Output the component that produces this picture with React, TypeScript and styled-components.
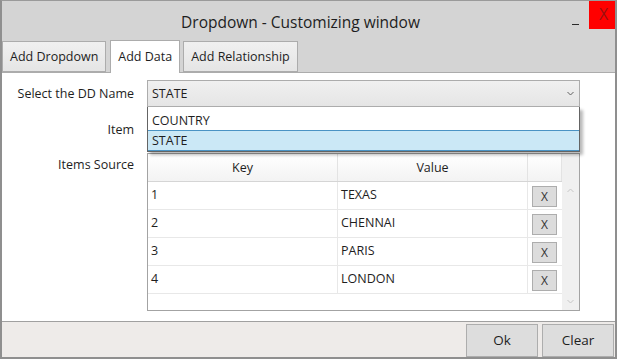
import React from "react";
import styled, { createGlobalStyle } from "styled-components";

const Global = createGlobalStyle`
  html, body { margin: 0; padding: 0; background: #ffffff; }
  body { font-family: "Open Sans", "Noto Sans", sans-serif; color: #1e1e1e; }
  * { box-sizing: border-box; }
`;

const Window = styled.div`
  width: 617px;
  height: 359px;
  display: flex;
  flex-direction: column;
  border: 2px solid #8f8f8f;
  border-top: 1px solid #9a9a9a;
  background: #d4d4d4;
  overflow: hidden;
`;

const TitleBar = styled.div`
  height: 39px;
  display: grid;
  grid-template-columns: 1fr auto 1fr;
  background: #d4d4d4;
`;

const Title = styled.div`
  grid-column: 2;
  font-size: 15.5px;
  line-height: 20px;
  padding-top: 11px;
  padding-right: 16px;
  color: #1e1e1e;
  white-space: nowrap;
`;

const Controls = styled.div`
  grid-column: 3;
  display: flex;
  justify-content: flex-end;
  align-items: flex-start;
`;

const Minimize = styled.div`
  width: 7px;
  height: 1px;
  margin-top: 23px;
  margin-right: 10px;
  background: #2a2a2a;
`;

const Close = styled.div`
  width: 28px;
  height: 29px;
  margin-top: -1px;
  margin-right: -2px;
  background: #ff0000;
  color: #9a1010;
  font-size: 16px;
  line-height: 29px;
  text-align: center;
  padding-left: 1px;
`;

const TabStrip = styled.div`
  height: 32px;
  display: flex;
  align-items: flex-end;
  background: #d4d4d4;
`;

const Tab = styled.div<{ $active?: boolean }>`
  height: ${(p) => (p.$active ? "33px" : "31px")};
  margin-bottom: ${(p) => (p.$active ? "-1px" : "0")};
  margin-right: ${(p) => (p.$active ? "3px" : "4px")};
  position: relative;
  z-index: ${(p) => (p.$active ? 2 : 0)};
  padding: 0 7px;
  border: 1px solid #acacac;
  border-bottom: ${(p) => (p.$active ? "none" : "1px solid #acacac")};
  background: ${(p) =>
    p.$active ? "#ffffff" : "linear-gradient(#f0f0f0, #e5e5e5)"};
  font-size: 12.5px;
  line-height: ${(p) => (p.$active ? "31px" : "29px")};
  color: #1e1e1e;
  white-space: nowrap;
`;

const Content = styled.div`
  flex: 1;
  background: #ffffff;
  border-top: 1px solid #acacac;
  padding: 7px 0 0 0;
`;

const Form = styled.div`
  display: grid;
  grid-template-columns: 132px 433px;
  grid-template-rows: 27px 30px 158px;
  column-gap: 13px;
  row-gap: 8px;
`;

const Label = styled.div<{ $top?: boolean }>`
  text-align: right;
  font-size: 12.5px;
  line-height: 16px;
  align-self: ${(p) => (p.$top ? "start" : "center")};
  padding-top: ${(p) => (p.$top ? "4px" : "0")};
  color: #1e1e1e;
  white-space: nowrap;
`;

const ComboWrap = styled.div`
  position: relative;
  z-index: 5;
`;

const Combo = styled.div`
  height: 27px;
  border: 1px solid #acacac;
  background: linear-gradient(#f0f0f0, #e5e5e5);
  display: flex;
  align-items: center;
  justify-content: space-between;
  padding: 0 5px 0 4px;
  font-size: 12.5px;
  color: #1e1e1e;
`;

const Popup = styled.div`
  position: absolute;
  left: 0;
  right: 0;
  top: 100%;
  background: #ffffff;
  border: 1px solid #646464;
  border-top: none;
  box-shadow: 3px 3px 3px rgba(0, 0, 0, 0.28);
`;

const Option = styled.div<{ $selected?: boolean }>`
  height: ${(p) => (p.$selected ? "21px" : "23px")};
  padding-left: 4px;
  font-size: 12.5px;
  line-height: ${(p) => (p.$selected ? "19px" : "25px")};
  background: ${(p) => (p.$selected ? "#cbe8f6" : "#ffffff")};
  border: 1px solid ${(p) => (p.$selected ? "#4a93c4" : "transparent")};
  border-left-width: 0;
  border-right-width: 0;
  color: #1e1e1e;
`;

const TextBox = styled.div`
  height: 30px;
  border: 1px solid #abadb3;
  background: #ffffff;
`;

const DataGrid = styled.div`
  border: 1px solid #a3a3a3;
  display: flex;
  background: #ffffff;
`;

const Table = styled.div`
  flex: 1;
  display: flex;
  flex-direction: column;
`;

const HeaderRow = styled.div`
  display: grid;
  grid-template-columns: 190px 190px 1fr;
  height: 28px;
  border-bottom: 1px solid #d5d5d5;
  background: linear-gradient(#ffffff, #f3f3f3);
`;

const HeaderCell = styled.div`
  border-right: 1px solid #e3e3e3;
  text-align: center;
  font-size: 12.5px;
  line-height: 27px;
  color: #1e1e1e;
`;

const Row = styled.div`
  display: grid;
  grid-template-columns: 190px 190px 1fr;
  height: 28px;
  border-bottom: 1px solid #e8e8e8;
`;

const Cell = styled.div`
  border-right: 1px solid #e8e8e8;
  padding: 4px 0 0 3px;
  font-size: 12.5px;
  line-height: 17px;
  color: #1e1e1e;
`;

const ActionCell = styled.div`
  padding: 4px 0 0 4px;
`;

const SmallButton = styled.div`
  width: 25px;
  height: 21px;
  border: 1px solid #adadad;
  background: #dcdcdc;
  font-size: 12px;
  line-height: 19px;
  text-align: center;
  color: #333333;
`;

const ScrollBar = styled.div`
  width: 17px;
  display: flex;
  flex-direction: column;
  background: #f0f0f0;
`;

const ScrollCorner = styled.div`
  height: 28px;
  background: #f0f0f0;
`;

const ScrollArrow = styled.div`
  height: 17px;
  display: flex;
  align-items: center;
  justify-content: center;
`;

const ScrollTrack = styled.div`
  flex: 1;
`;

const Footer = styled.div`
  height: 36px;
  border-top: 1px solid #a0a0a0;
  background: #eeebe9;
  display: flex;
  justify-content: flex-end;
  align-items: flex-start;
  gap: 4px;
  padding: 2px 1px 0 0;
`;

const DialogButton = styled.div`
  width: 72px;
  height: 33px;
  border: 1px solid #adadad;
  background: #dddddd;
  font-size: 13.5px;
  line-height: 31px;
  text-align: center;
  color: #1e1e1e;
`;

const Chevron = ({ dir, color }: { dir: "up" | "down"; color: string }) => (
  <svg width="7" height="5" viewBox="0 0 7 5">
    <polyline
      points={dir === "down" ? "0.5,1 3.5,4 6.5,1" : "0.5,4 3.5,1 6.5,4"}
      fill="none"
      stroke={color}
      strokeWidth="1"
    />
  </svg>
);

const rows = [
  { key: "1", value: "TEXAS" },
  { key: "2", value: "CHENNAI" },
  { key: "3", value: "PARIS" },
  { key: "4", value: "LONDON" },
];

export default function App() {
  return (
    <>
      <Global />
      <Window>
        <TitleBar>
          <Title>Dropdown - Customizing window</Title>
          <Controls>
            <Minimize />
            <Close>X</Close>
          </Controls>
        </TitleBar>
        <TabStrip>
          <Tab>Add Dropdown</Tab>
          <Tab $active>Add Data</Tab>
          <Tab>Add Relationship</Tab>
        </TabStrip>
        <Content>
          <Form>
            <Label>Select the DD Name</Label>
            <ComboWrap>
              <Combo>
                <span>STATE</span>
                <Chevron dir="down" color="#606060" />
              </Combo>
              <Popup>
                <Option>COUNTRY</Option>
                <Option $selected>STATE</Option>
              </Popup>
            </ComboWrap>
            <Label>Item</Label>
            <TextBox />
            <Label $top>Items Source</Label>
            <DataGrid>
              <Table>
                <HeaderRow>
                  <HeaderCell>Key</HeaderCell>
                  <HeaderCell>Value</HeaderCell>
                  <HeaderCell />
                </HeaderRow>
                {rows.map((r) => (
                  <Row key={r.key}>
                    <Cell>{r.key}</Cell>
                    <Cell>{r.value}</Cell>
                    <ActionCell>
                      <SmallButton>X</SmallButton>
                    </ActionCell>
                  </Row>
                ))}
              </Table>
              <ScrollBar>
                <ScrollCorner />
                <ScrollArrow>
                  <Chevron dir="up" color="#c6c6c6" />
                </ScrollArrow>
                <ScrollTrack />
                <ScrollArrow>
                  <Chevron dir="down" color="#c6c6c6" />
                </ScrollArrow>
              </ScrollBar>
            </DataGrid>
          </Form>
        </Content>
        <Footer>
          <DialogButton>Ok</DialogButton>
          <DialogButton>Clear</DialogButton>
        </Footer>
      </Window>
    </>
  );
}
